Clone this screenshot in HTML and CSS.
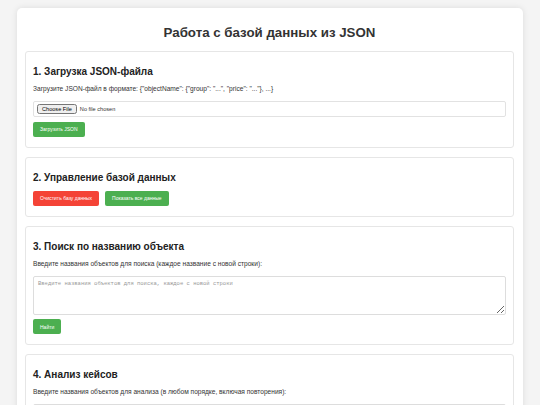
FILE: index.html
```html
<!DOCTYPE html>
<html lang="ru">

<head>
    <meta charset="UTF-8">
    <meta name="viewport" content="width=device-width, initial-scale=1.0">
    <title>Работа с базой данных из JSON</title>
    <link rel="stylesheet" href="styles.css">
</head>

<body>
    <div class="container">
        <h1 class="title">Работа с базой данных из JSON</h1>

        <!-- Загрузка -->
        <section class="section">
            <h2 class="section__h2">1. Загрузка JSON-файла</h2>
            <p class="section__text">Загрузите JSON-файл в формате: {"objectName": {"group": "...", "price": "..."}, ...}</p>
            <div class="file-box">
                <input type="file" id="fileInput" accept=".json">
            </div>
            <button class="btn" id="btnLoad">Загрузить JSON</button>
        </section>

        <!-- Управление -->
        <section class="section">
            <h2 class="section__h2">2. Управление базой данных</h2>
            <div class="btn-row">
                <button class="btn btn--red" id="btnClear">Очистить базу данных</button>
                <button class="btn" id="btnShowAll">Показать все данные</button>
            </div>
        </section>

        <!-- Поиск -->
        <section class="section">
            <h2 class="section__h2">3. Поиск по названию объекта</h2>
            <p class="section__text">Введите названия объектов для поиска (каждое название с новой строки):</p>
            <textarea class="area" id="searchInput" placeholder="Введите названия объектов для поиска, каждое с новой строки"></textarea>
            <button class="btn" id="btnSearch">Найти</button>
        </section>

        <!-- Анализ -->
        <section class="section">
            <h2 class="section__h2">4. Анализ кейсов</h2>
            <p class="section__text">Введите названия объектов для анализа (в любом порядке, включая повторения):</p>
            <textarea class="area" id="caseInput" placeholder="Введите названия объектов через перенос строки"></textarea>
            <button class="btn" id="btnAnalyze">Анализировать</button>
        </section>
    </div>
</body>

</html>
```

FILE: styles.css
```css
* {
    margin: 0;
    padding: 0;
    box-sizing: border-box;
}

body {
    padding: 8px 17px;
    background-color: #f4f4f4;
    font-family: "Liberation Sans", Arial, sans-serif;
    color: #333;
}

/* Contenedor */
.container {
    padding: 8px 9px 8px 8px;
    background-color: #fff;
    border-radius: 5px;
    box-shadow: 0 0 6px rgba(0, 0, 0, 0.1);
}

.title {
    margin: 9px 0 10px;
    font-size: 13.3px;
    line-height: 16px;
    text-align: center;
    color: #333;
}

/* Secciones */
.section {
    margin-bottom: 9px;
    padding: 14px 7px 10px;
    border: 1px solid #e6e6e6;
    border-radius: 3px;
}

.section__h2 {
    margin-bottom: 7px;
    font-size: 10px;
    line-height: 12px;
    color: #222;
}

.section__text {
    margin-bottom: 9px;
    font-size: 6.6px;
    line-height: 7px;
    color: #333;
}

.file-box {
    height: 16px;
    padding: 2px 3px;
    border: 1px solid #e2e2e2;
    border-radius: 2px;
}

.file-box input {
    display: block;
    height: 10px;
    font-family: "Liberation Sans", Arial, sans-serif;
    font-size: 5.6px;
    line-height: 10px;
}

.file-box input::file-selector-button {
    height: 10px;
    margin-right: 3px;
    padding: 0 3px;
    font-size: 5.6px;
}

/* Botones */
.btn {
    display: inline-block;
    height: 15px;
    margin-top: 3px;
    padding: 0 7px;
    border: none;
    border-radius: 2px;
    background-color: #4caf50;
    color: #fff;
    font-family: "Liberation Sans", Arial, sans-serif;
    font-size: 5px;
    cursor: pointer;
}

.btn--red {
    background-color: #f44336;
}

.btn-row {
    display: flex;
    gap: 6px;
}

.btn-row .btn {
    margin-top: 0;
}

.area {
    display: block;
    width: 100%;
    height: 39px;
    padding: 3px 4px;
    border: 1px solid #ddd;
    border-radius: 2px;
    font-family: "Liberation Mono", monospace;
    font-size: 5.5px;
    resize: vertical;
}

.area + .btn {
    margin-top: 4px;
}

.area::placeholder {
    color: #999;
}
```
